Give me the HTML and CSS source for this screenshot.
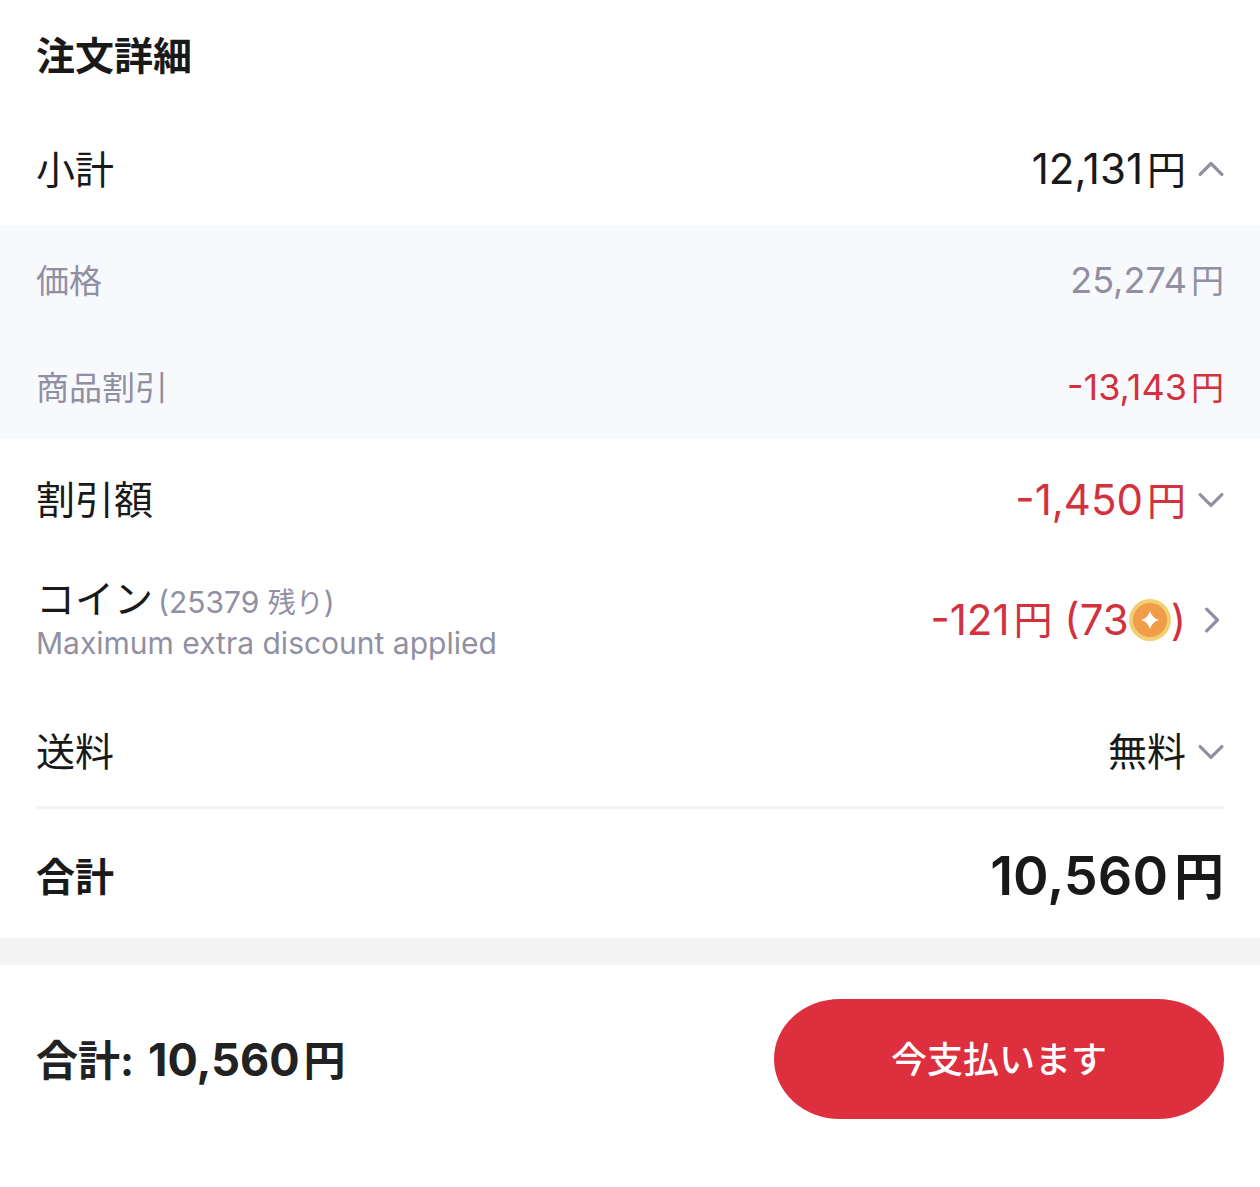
FILE: index.html
```html
<!DOCTYPE html>
<html lang="ja">

<head>
    <meta charset="UTF-8" />
    <meta name="viewport" content="width=device-width, initial-scale=1.0" />
    <title>注文詳細</title>
    <link rel="stylesheet" href="styles.css">
</head>

<body>
    <main>
        <h1 class="title">注文詳細</h1>

        <div class="row">
            <span>小計</span>
            <button class="amount toggle" type="button" aria-expanded="true">
                <span>12,131<span class="yen">円</span></span>
                <svg class="arrow" viewBox="0 0 24 24"><path d="M2 16 12 6l10 10" /></svg>
            </button>
        </div>

        <div class="details">
            <div class="row">
                <span>価格</span>
                <span class="amount">25,274<span class="yen">円</span></span>
            </div>
            <div class="row">
                <span>商品割引</span>
                <span class="amount red">-13,143<span class="yen">円</span></span>
            </div>
        </div>

        <div class="row discount">
            <span>割引額</span>
            <button class="amount toggle red" type="button" aria-expanded="false">
                <span>-1,450<span class="yen">円</span></span>
                <svg class="arrow" viewBox="0 0 24 24"><path d="M2 7l10 10L22 7" /></svg>
            </button>
        </div>

        <div class="row coins">
            <div>
                <div class="coin-label">コイン <span class="note">(25379 <span class="note-jp">残り</span>)</span></div>
                <div class="note">Maximum extra discount applied</div>
            </div>
            <button class="amount toggle red" type="button">
                <span class="coin-amount">-121<span class="yen">円</span>&nbsp;(73<svg class="coin" viewBox="0 0 42 42">
                        <circle cx="21" cy="21" r="21" fill="#f2cf72" />
                        <circle cx="21" cy="21" r="17" fill="#f09c48" />
                        <path d="M21 12q2 7 9 9-7 2-9 9-2-7-9-9 7-2 9-9z" fill="#fff" />
                    </svg>)</span>
                <svg class="arrow" viewBox="0 0 24 24"><path d="M8 2l10 10L8 22" /></svg>
            </button>
        </div>

        <div class="row shipping">
            <span>送料</span>
            <button class="amount toggle" type="button" aria-expanded="false">
                <span class="free">無料</span>
                <svg class="arrow" viewBox="0 0 24 24"><path d="M2 7l10 10L22 7" /></svg>
            </button>
        </div>

        <div class="row total">
            <span>合計</span>
            <span class="amount">10,560<span class="yen">円</span></span>
        </div>
    </main>

    <footer>
        <div class="pay-total">合計: <span class="pay-amount">10,560<span class="yen">円</span></span></div>
        <button class="pay" type="button">今支払います</button>
    </footer>
</body>

</html>
```

FILE: styles.css
```css
* {
    box-sizing: border-box;
}

body {
    margin: 0;
    background: #fff;
    color: #191919;
    font-family: Inter, "Noto Sans CJK JP", sans-serif;
    font-size: 39px;
    line-height: 48px;
}

button {
    padding: 0;
    border: none;
    background: none;
    color: inherit;
    font: inherit;
    cursor: pointer;
}

.title {
    margin: 0;
    padding: 32px 36px;
    font-size: 39px;
    font-weight: 700;
}

.row {
    display: flex;
    justify-content: space-between;
    align-items: center;
    min-height: 113px;
    padding: 2px 36px 0;
}

.amount {
    font-size: 42px;
    white-space: nowrap;
}

.yen {
    margin-left: 4px;
    font-size: 39px;
}

.toggle {
    display: flex;
    align-items: center;
    gap: 12px;
}

.arrow {
    width: 26px;
    height: 26px;
    fill: none;
    stroke: #9090a2;
    stroke-width: 3;
    stroke-linecap: round;
    stroke-linejoin: round;
}

.red {
    color: #d3313d;
}

.details {
    background: #f8f9fc;
    color: #9090a2;
    font-size: 33px;
}

.details .row {
    min-height: 107px;
    padding-top: 4px;
}

.details .amount {
    font-size: 36px;
}

.details .yen {
    font-size: 33px;
}

.discount,
.coins {
    min-height: 120px;
}

.coin-label {
    line-height: 44px;
}

.note {
    color: #9090a2;
    font-size: 30px;
    line-height: 40px;
}

.note-jp {
    font-size: 28px;
}

.coin-label .note {
    margin-left: -6px;
}

.coin-amount {
    display: flex;
    align-items: center;
}

.coin {
    width: 42px;
    height: 42px;
}

.free {
    font-size: 39px;
}

.shipping {
    min-height: 130px;
    padding: 18px 0 0;
    margin: 0 36px;
    border-bottom: 3px solid #f4f4f4;
}

.total {
    min-height: 129px;
    padding-top: 6px;
    font-weight: 700;
}

.total .amount {
    font-size: 54px;
    font-weight: 600;
}

.total .yen {
    margin-left: 6px;
    font-size: 50px;
}

footer {
    display: flex;
    justify-content: space-between;
    align-items: center;
    padding: 34px 36px;
    border-top: 27px solid #f4f4f4;
}

.pay-total {
    padding-top: 2px;
    color: #222;
    font-size: 42px;
    font-weight: 700;
}

.pay-amount {
    margin-left: 4px;
    font-size: 45px;
}

.pay-total .yen {
    font-size: 42px;
}

.pay {
    flex: 0 1 450px;
    height: 120px;
    padding-top: 2px;
    border-radius: 66px / 60px;
    background: #dd2f3d;
    color: #fff;
    font-size: 36px;
    font-weight: 500;
}
```
